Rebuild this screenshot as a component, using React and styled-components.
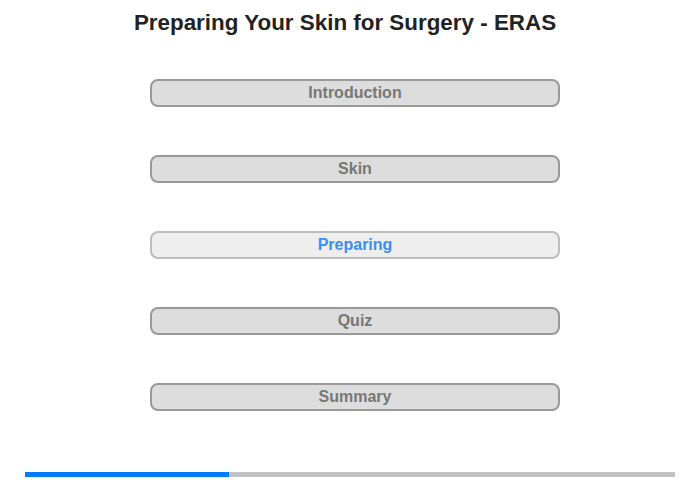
import styled, { createGlobalStyle } from "styled-components";

const Global = createGlobalStyle`
  body {
    margin: 0;
    background: #fff;
    font-family: "Liberation Sans", Arial, sans-serif;
  }
`;

const Page = styled.div`
  width: 700px;
  height: 480px;
  display: flex;
  flex-direction: column;
  box-sizing: border-box;
`;

const Title = styled.h1`
  margin: 0;
  padding-top: 10px;
  padding-right: 10px;
  font-size: 22.4px;
  font-weight: bold;
  color: #222;
  text-align: center;
  line-height: 26px;
`;

const Menu = styled.div`
  display: flex;
  flex-direction: column;
  align-items: center;
  gap: 48px;
  margin-top: 43px;
  padding-left: 9px;
`;

const MenuButton = styled.div`
  width: 410px;
  height: 28px;
  box-sizing: border-box;
  border: 2px solid ${(p) => (p.active ? "#bdbdbd" : "#999")};
  border-radius: 8px;
  background: ${(p) => (p.active ? "#eee" : "#ddd")};
  color: ${(p) => (p.active ? "#3a8ff5" : "#777")};
  font-size: 16px;
  font-weight: bold;
  display: flex;
  align-items: center;
  justify-content: center;
  padding-left: 1px;
  cursor: pointer;
`;

const Progress = styled.div`
  margin: auto 25px 3px;
  height: 5px;
  background: #c2c2c2;
`;

const ProgressFill = styled.div`
  height: 100%;
  background: #007bff;
`;

const items = ["Introduction", "Skin", "Preparing", "Quiz", "Summary"];

export default function App() {
  const current = 2;
  return (
    <Page>
      <Global />
      <Title>Preparing Your Skin for Surgery - ERAS</Title>
      <Menu>
        {items.map((label, i) => (
          <MenuButton key={label} active={i === current}>
            {label}
          </MenuButton>
        ))}
      </Menu>
      <Progress>
        <ProgressFill style={{ width: `${(204 / 650) * 100}%` }} />
      </Progress>
    </Page>
  );
}
